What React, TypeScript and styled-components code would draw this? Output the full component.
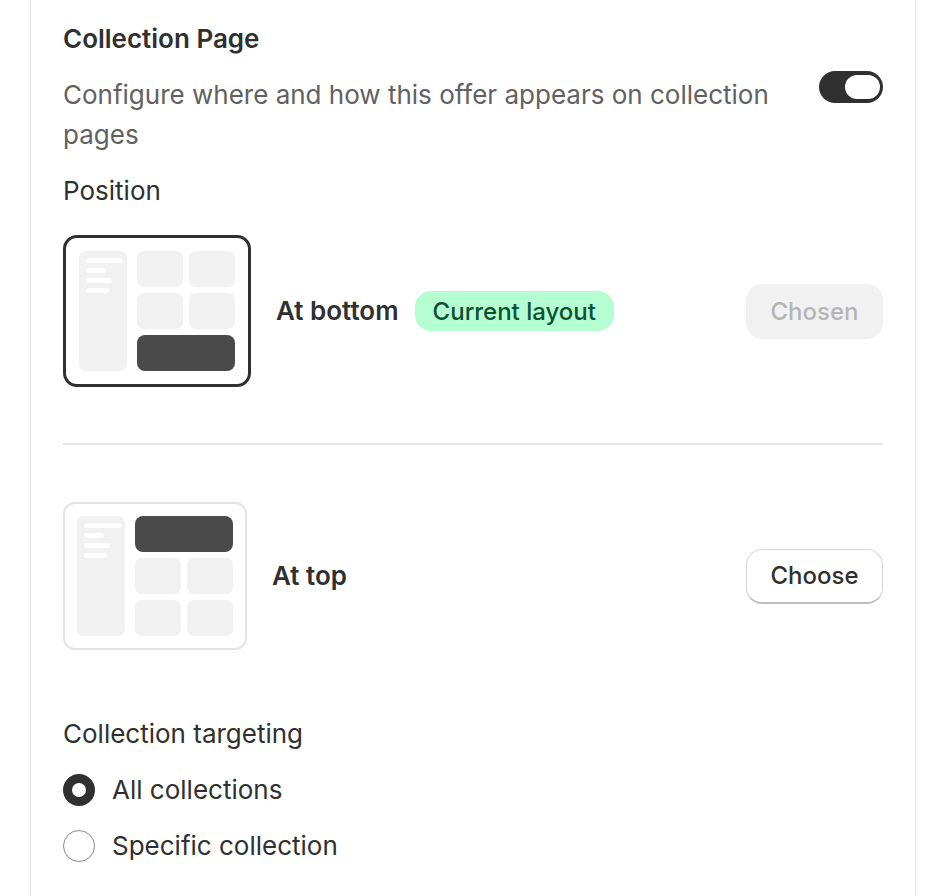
import React, { useState } from "react";
import styled, { createGlobalStyle } from "styled-components";

const GlobalStyle = createGlobalStyle`
  html, body { margin: 0; padding: 0; background: #ffffff; }
  body { font-family: Inter, "Noto Sans", "Liberation Sans", sans-serif; color: #303030; }
  * { box-sizing: border-box; }
`;

const Page = styled.div`
  padding-left: 30px;
  min-height: 896px;
`;

const Card = styled.section`
  width: 886px;
  min-height: 896px;
  background: #ffffff;
  border-left: 1px solid #e3e3e3;
  border-right: 1px solid #e3e3e3;
  padding: 19px 32px 32px;
  display: flex;
  flex-direction: column;
`;

const Title = styled.h2`
  margin: 0;
  font-size: 26px;
  line-height: 40px;
  font-weight: 600;
  color: #303030;
`;

const HeaderRow = styled.div`
  display: flex;
  align-items: flex-start;
  justify-content: space-between;
  gap: 24px;
  margin-top: 16px;
`;

const Description = styled.p`
  margin: 0;
  max-width: 735px;
  font-size: 26px;
  line-height: 40px;
  color: #616161;
`;

const Toggle = styled.button<{ $on: boolean }>`
  flex: none;
  width: 64px;
  height: 32px;
  margin-top: -4px;
  border: none;
  border-radius: 16px;
  background: ${(p) => (p.$on ? "#303030" : "#c7c7c7")};
  padding: 0 3px;
  display: flex;
  align-items: center;
  justify-content: ${(p) => (p.$on ? "flex-end" : "flex-start")};
  cursor: pointer;
`;

const Knob = styled.span`
  width: 35px;
  height: 24px;
  border-radius: 12px;
  background: #ffffff;
`;

const Label = styled.div`
  font-size: 26px;
  line-height: 40px;
  color: #303030;
`;

const PositionLabel = styled(Label)`
  margin-top: 16px;
`;

const Options = styled.div`
  margin-top: 24px;
  display: flex;
  flex-direction: column;
`;

const OptionRow = styled.div`
  display: flex;
  align-items: center;
`;

const Divider = styled.hr`
  margin: 56px 0 57px;
  border: none;
  height: 2px;
  background: #e6e6e6;
`;

const Thumb = styled.div<{ $selected: boolean }>`
  flex: none;
  display: grid;
  grid-template-columns: 52px 46px 46px;
  grid-template-rows: 36px 36px 36px;
  column-gap: 6px;
  row-gap: 6px;
  border-radius: ${(p) => (p.$selected ? "14px" : "12px")};
  border: ${(p) => (p.$selected ? "3px solid #303030" : "2px solid #e3e3e3")};
  padding: ${(p) => (p.$selected ? "13px" : "12px")};
  background: #ffffff;
`;

const SideBar = styled.div`
  grid-row: 1 / 4;
  grid-column: 1;
  margin-right: 4px;
  background: #f1f1f1;
  border-radius: 7px;
  padding: 7px 5px 0 7px;
  display: flex;
  flex-direction: column;
  gap: 5px;
`;

const SideLine = styled.span<{ $w: number }>`
  display: block;
  width: ${(p) => p.$w}px;
  height: 5px;
  border-radius: 3px;
  background: #ffffff;
`;

const Cell = styled.div`
  background: #f1f1f1;
  border-radius: 7px;
`;

const Banner = styled.div<{ $row: number }>`
  grid-column: 2 / 4;
  grid-row: ${(p) => p.$row};
  background: #4a4a4a;
  border-radius: 8px;
`;

const OptionName = styled.span`
  margin-left: 25px;
  font-size: 26px;
  line-height: 40px;
  font-weight: 600;
  color: #303030;
`;

const Badge = styled.span`
  margin-left: 16px;
  height: 40px;
  padding: 0 18px;
  display: inline-flex;
  align-items: center;
  border-radius: 16px;
  background: #b4fed2;
  color: #0c5132;
  font-size: 24px;
  font-weight: 550;
`;

const Spacer = styled.div`
  flex: 1;
`;

const ActionButton = styled.button<{ $chosen: boolean }>`
  flex: none;
  width: 137px;
  height: 55px;
  border-radius: 16px;
  font-family: inherit;
  font-size: 24px;
  font-weight: 550;
  cursor: ${(p) => (p.$chosen ? "default" : "pointer")};
  border: ${(p) => (p.$chosen ? "none" : "1px solid #d6d6d6")};
  border-bottom: ${(p) => (p.$chosen ? "none" : "2px solid #bdbdbd")};
  background: ${(p) => (p.$chosen ? "#f1f1f1" : "#ffffff")};
  color: ${(p) => (p.$chosen ? "#b5b5b5" : "#303030")};
`;

const TargetingLabel = styled(Label)`
  margin-top: 64px;
`;

const RadioList = styled.div`
  margin-top: 16px;
  display: flex;
  flex-direction: column;
  gap: 16px;
`;

const RadioRow = styled.label`
  display: flex;
  align-items: center;
  gap: 17px;
  cursor: pointer;
`;

const RadioCircle = styled.span<{ $checked: boolean }>`
  flex: none;
  width: 32px;
  height: 32px;
  border-radius: 50%;
  background: #ffffff;
  border: ${(p) => (p.$checked ? "9.5px solid #303030" : "1px solid #8a8a8a")};
`;

const RadioText = styled.span`
  font-size: 26px;
  line-height: 40px;
  color: #303030;
`;

type Pos = "bottom" | "top";

function Thumbnail({ pos, selected }: { pos: Pos; selected: boolean }) {
  return (
    <Thumb $selected={selected}>
      <SideBar>
        <SideLine $w={37} />
        <SideLine $w={20} />
        <SideLine $w={26} />
        <SideLine $w={23} />
      </SideBar>
      {pos === "top" && <Banner $row={1} />}
      <Cell />
      <Cell />
      <Cell />
      <Cell />
      {pos === "bottom" && <Banner $row={3} />}
    </Thumb>
  );
}

export default function App() {
  const [on, setOn] = useState(true);
  const [pos, setPos] = useState<Pos>("bottom");
  const [target, setTarget] = useState<"all" | "specific">("all");

  return (
    <>
      <GlobalStyle />
      <Page>
        <Card>
          <Title>Collection Page</Title>
          <HeaderRow>
            <Description>
              Configure where and how this offer appears on collection pages
            </Description>
            <Toggle $on={on} onClick={() => setOn(!on)} aria-label="Toggle collection page">
              <Knob />
            </Toggle>
          </HeaderRow>
          <PositionLabel>Position</PositionLabel>
          <Options>
            <OptionRow>
              <Thumbnail pos="bottom" selected={pos === "bottom"} />
              <OptionName>At bottom</OptionName>
              {pos === "bottom" && <Badge>Current layout</Badge>}
              <Spacer />
              <ActionButton $chosen={pos === "bottom"} onClick={() => setPos("bottom")}>
                {pos === "bottom" ? "Chosen" : "Choose"}
              </ActionButton>
            </OptionRow>
            <Divider />
            <OptionRow>
              <Thumbnail pos="top" selected={pos === "top"} />
              <OptionName>At top</OptionName>
              {pos === "top" && <Badge>Current layout</Badge>}
              <Spacer />
              <ActionButton $chosen={pos === "top"} onClick={() => setPos("top")}>
                {pos === "top" ? "Chosen" : "Choose"}
              </ActionButton>
            </OptionRow>
          </Options>
          <TargetingLabel>Collection targeting</TargetingLabel>
          <RadioList>
            <RadioRow onClick={() => setTarget("all")}>
              <RadioCircle $checked={target === "all"} />
              <RadioText>All collections</RadioText>
            </RadioRow>
            <RadioRow onClick={() => setTarget("specific")}>
              <RadioCircle $checked={target === "specific"} />
              <RadioText>Specific collection</RadioText>
            </RadioRow>
          </RadioList>
        </Card>
      </Page>
    </>
  );
}
